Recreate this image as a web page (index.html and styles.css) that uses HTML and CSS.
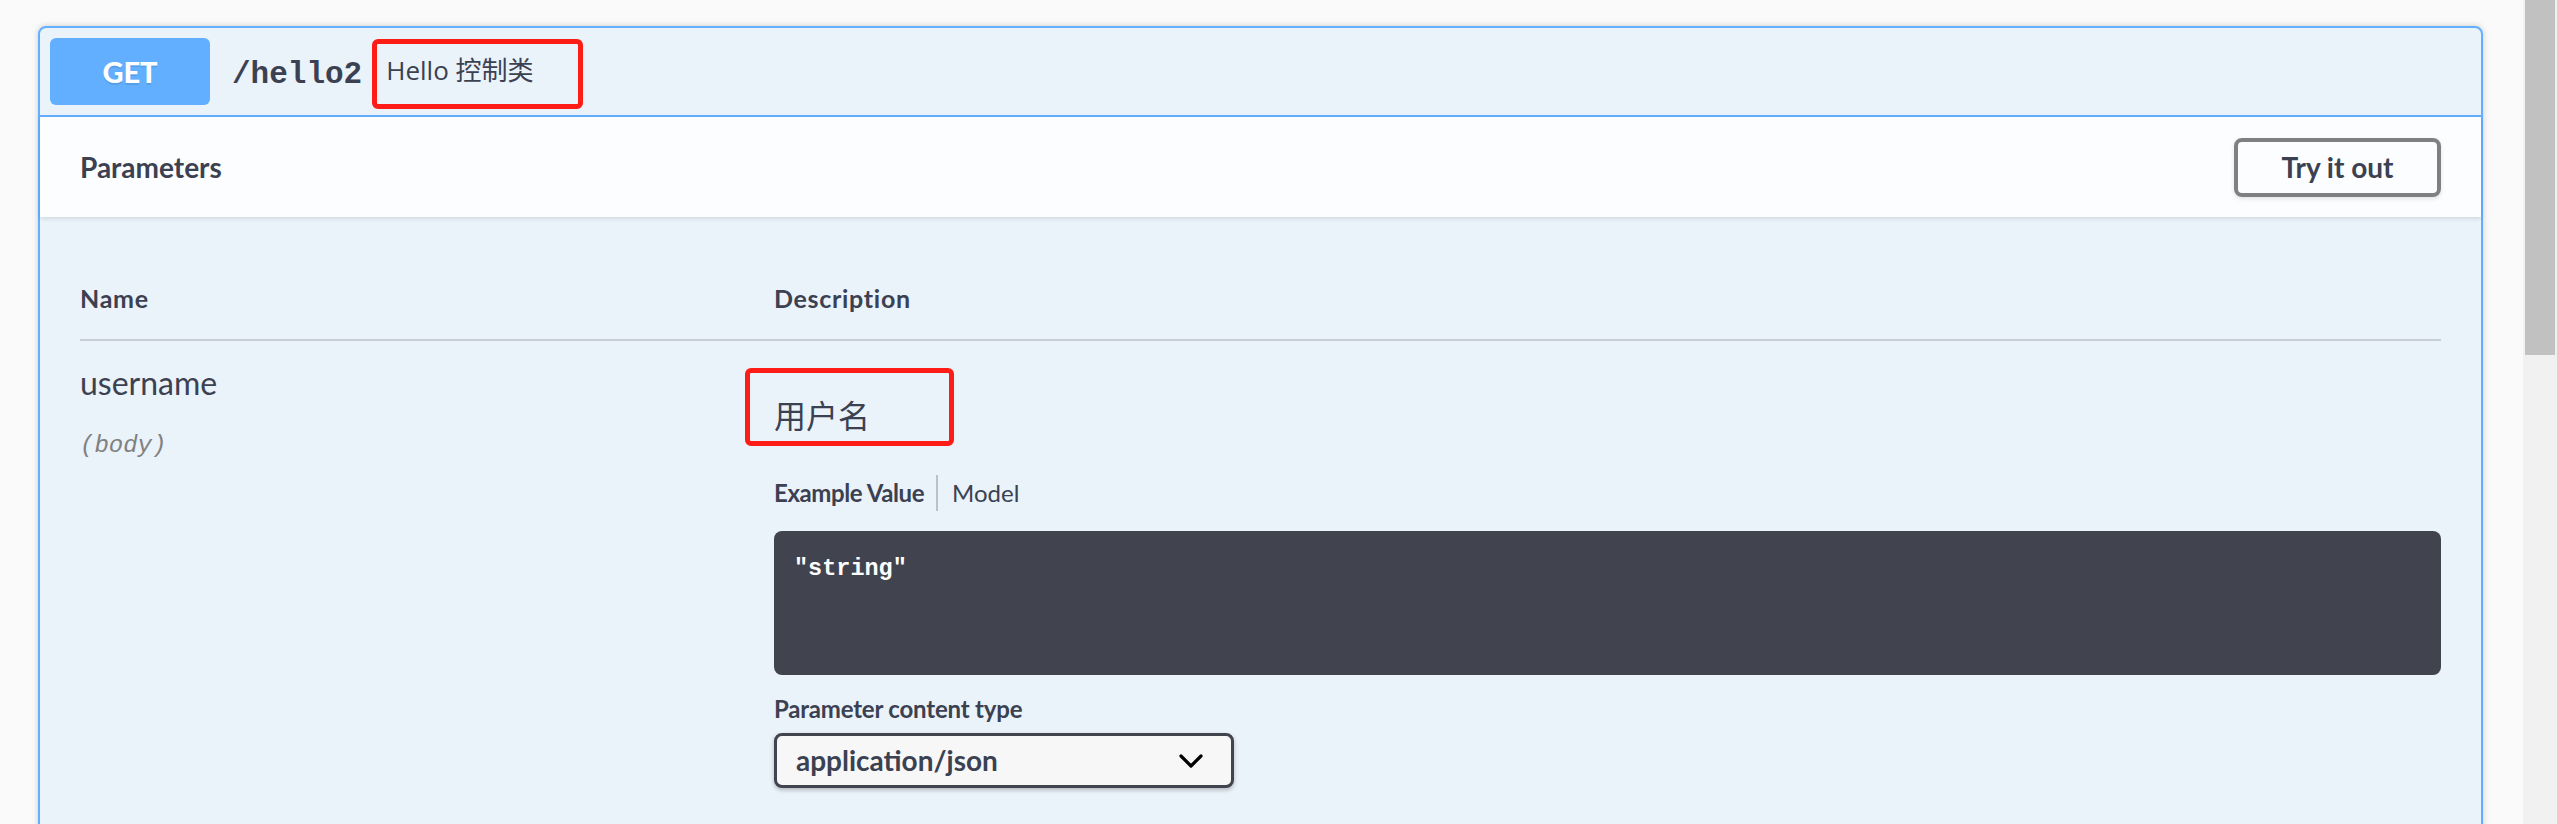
FILE: index.html
```html
<!DOCTYPE html>
<html lang="zh-CN">
<head>
<meta charset="utf-8">
<title>/hello2</title>
<link rel="stylesheet" href="styles.css">
</head>
<body>
<div class="viewport">
  <main class="page">
    <section class="opblock">
      <div class="summary">
        <span class="method">GET</span>
        <span class="path">/hello2</span>
        <span class="summary-desc">Hello 控制类</span>
      </div>
      <div class="section-header">
        <h4 class="section-title">Parameters</h4>
        <button class="try-out">Try it out</button>
      </div>
      <div class="table-container">
        <div class="params">
          <div class="th">Name</div>
          <div class="th">Description</div>
          <div class="td name-cell">
            <div class="param-name">username</div>
            <div class="param-in">(body)</div>
          </div>
          <div class="td desc-cell">
            <div class="md"><p class="md-text">用户名</p><span class="annot"></span></div>
            <ul class="tabs">
              <li class="tab tab-active">Example Value</li>
              <li class="tab-sep"></li>
              <li class="tab">Model</li>
            </ul>
            <pre class="code">"string"</pre>
            <div class="ct-label">Parameter content type</div>
            <div class="select">
              <span class="select-value">application/json</span>
              <svg class="chevron" width="24" height="14" viewBox="0 0 24 14"><polyline points="2,2 12,12 22,2" fill="none" stroke="#000" stroke-width="3.2" stroke-linecap="round" stroke-linejoin="round"/></svg>
            </div>
          </div>
        </div>
      </div>
    </section>
  </main>
  <div class="scrollbar"><div class="thumb"></div></div>
</div>
</body>
</html>
```

FILE: styles.css
```css
* { box-sizing: border-box; }

html, body {
  margin: 0;
  padding: 0;
  height: 100%;
}

body {
  background: #fafafa;
  color: #3b4151;
  font-family: "Lato", "Noto Sans CJK SC", sans-serif;
  overflow: hidden;
}

.viewport {
  display: flex;
  height: 100vh;
  overflow: hidden;
}

.page {
  flex: 1;
  padding: 26px 40px 0 38px;
  overflow: hidden;
}

.opblock {
  border: 2px solid #61affe;
  border-radius: 8px;
  background: rgba(97, 175, 254, 0.1);
  box-shadow: 0 0 6px rgba(0, 0, 0, 0.19);
}

/* summary bar */
.summary {
  display: flex;
  align-items: center;
  padding: 10px;
  border-bottom: 2px solid #61affe;
}

.method {
  width: 160px;
  height: 67px;
  display: flex;
  align-items: center;
  justify-content: center;
  background: #61affe;
  border-radius: 6px;
  color: #fff;
  font-size: 29px;
  font-weight: 900;
  text-shadow: 0 2px 0 rgba(0, 0, 0, 0.1);
}

.path {
  margin-top: 6px;
  padding: 0 10px 0 22px;
  font-family: "Liberation Mono", monospace;
  font-weight: 700;
  font-size: 31px;
  color: #3b4151;
}

.summary-desc {
  margin: 1px 0 -4px;
  width: 211px;
  height: 70px;
  border: 5px solid #fe1c16;
  border-radius: 6px;
  padding: 8px 0 0 9px;
  font-family: "Open Sans", "Noto Sans CJK SC", sans-serif;
  font-size: 26px;
  line-height: 36px;
  color: #3b4151;
  white-space: nowrap;
}

/* parameters header */
.section-header {
  display: flex;
  align-items: center;
  justify-content: space-between;
  min-height: 100px;
  padding: 16px 40px;
  background: rgba(255, 255, 255, 0.8);
  box-shadow: 0 2px 4px rgba(0, 0, 0, 0.1);
}

.section-title {
  margin: 0;
  font-size: 28px;
  font-weight: 700;
  color: #3b4151;
}

.try-out {
  width: 207px;
  height: 59px;
  border: 4px solid #808080;
  border-radius: 8px;
  background: transparent;
  box-shadow: 0 2px 4px rgba(0, 0, 0, 0.1);
  font-family: "Lato", sans-serif;
  font-size: 28px;
  font-weight: 700;
  color: #3b4151;
  padding: 0;
}

/* table */
.table-container {
  padding: 40px 40px 120px;
}

.params {
  display: grid;
  grid-template-columns: 694px 1fr;
}

.th {
  padding: 24px 0;
  line-height: 34px;
  font-size: 25px;
  letter-spacing: 0.7px;
  font-weight: 700;
  color: #3b4151;
  border-bottom: 2px solid rgba(59, 65, 81, 0.2);
}

.name-cell {
  padding-top: 18px;
}

.param-name {
  font-size: 32px;
  line-height: 48px;
  color: #3b4151;
}

.param-in {
  margin-top: 21px;
  font-family: "Liberation Mono", monospace;
  font-style: italic;
  font-size: 24px;
  line-height: 36px;
  color: #808080;
}

.desc-cell {
  padding-top: 20px;
}

.md {
  position: relative;
  margin-top: 29px;
}

.md-text {
  margin: 0;
  font-family: "Noto Sans CJK SC", sans-serif;
  font-size: 32px;
  line-height: 48px;
  color: #3b4151;
}

.annot {
  position: absolute;
  left: -29px;
  top: -22px;
  width: 209px;
  height: 78px;
  border: 5px solid #fe1c16;
  border-radius: 6px;
}

.tabs {
  display: flex;
  align-items: center;
  margin: 37px 0 0;
  padding: 0;
  list-style: none;
  height: 36px;
}

.tab {
  font-size: 24px;
  line-height: 36px;
  color: #3b4151;
}

.tab-active {
  font-weight: 700;
  letter-spacing: -0.4px;
}

.tab-sep {
  width: 2px;
  height: 36px;
  margin: 0 14px 0 12px;
  background: rgba(0, 0, 0, 0.2);
}

.code {
  margin: 20px 0 0;
  min-height: 144px;
  padding: 20px;
  border-radius: 8px;
  background: #41444e;
  color: #fff;
  font-family: "Liberation Mono", monospace;
  font-weight: 700;
  font-size: 23.5px;
  line-height: 36px;
}

.ct-label {
  margin-top: 16px;
  font-size: 24px;
  line-height: 36px;
  font-weight: 700;
  letter-spacing: -0.2px;
  color: #3b4151;
}

.select {
  margin-top: 6px;
  width: 460px;
  height: 55px;
  display: flex;
  align-items: center;
  justify-content: space-between;
  padding: 0 28px 0 19px;
  border: 3px solid #41444e;
  border-radius: 8px;
  background: #f7f7f7;
  box-shadow: 0 2px 4px rgba(0, 0, 0, 0.25);
}

.select-value {
  font-size: 28px;
  line-height: 31px;
  font-weight: 700;
  color: #3b4151;
}

.chevron {
  display: block;
}

/* scrollbar */
.scrollbar {
  width: 34px;
  flex: none;
  background: #f1f1f1;
  padding: 0 2px;
}

.thumb {
  height: 355px;
  background: #c1c1c1;
}
```
